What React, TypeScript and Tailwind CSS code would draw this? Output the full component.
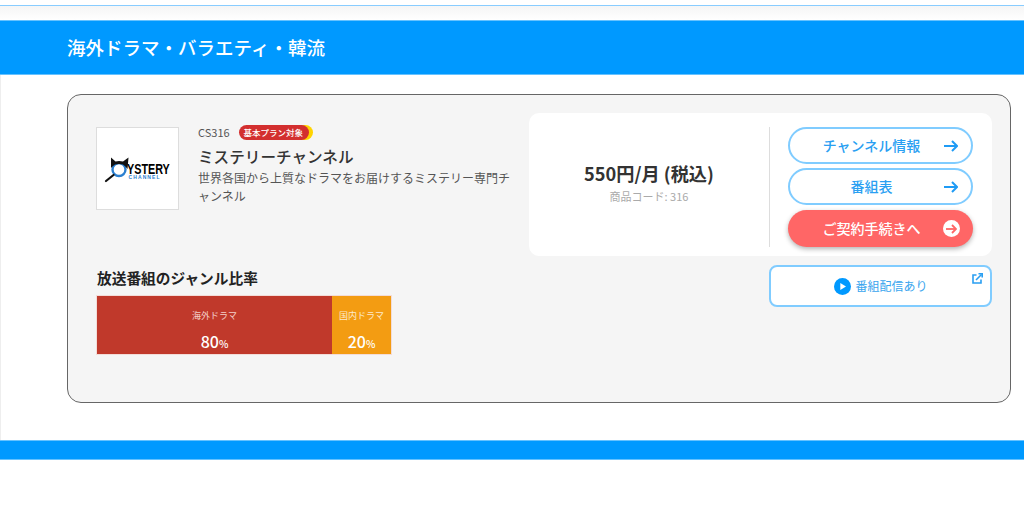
const Arrow = ({ color }: { color: string }) => (
  <svg width="14" height="12" viewBox="0 0 14 12" fill="none" stroke={color} strokeWidth="2">
    <path d="M0 6 H13" />
    <path d="M8 1 L13 6 L8 11" />
  </svg>
);

const LinkButton = ({ label }: { label: string }) => (
  <a className="relative flex h-[37px] w-[185px] items-center justify-center rounded-full border-2 border-[#80ccff] bg-white text-[14px] font-medium text-[#2a9ff2]">
    <span className="pr-[18px]">{label}</span>
    <span className="absolute right-[13px] top-[11px] flex">
      <Arrow color="#1f9bf5" />
    </span>
  </a>
);

const Logo = () => (
  <div className="flex h-[83px] w-[83px] shrink-0 items-center justify-center border border-[#dddddd] bg-white">
    <div className="relative h-[30px] w-[68px]">
      <svg className="absolute left-0 top-0" width="30" height="30" viewBox="0 0 30 30">
        <circle cx="15" cy="15.5" r="6.5" fill="none" stroke="#2b7fd0" strokeWidth="2.4" />
        <path d="M7 3.5 L7 14 Q9 11.5 11 10.5 Q15 9.5 19 10.5 Q21 11.5 23.5 15 L24.5 3.5 L19 7.5 Q15 6.5 11.5 7.5 Z" fill="#111" />
        <path d="M9.5 21 L2 27" stroke="#111" strokeWidth="2.2" strokeLinecap="round" />
      </svg>
      <span className="absolute left-[23px] top-[9px] origin-left scale-x-[0.72] text-[15px] font-bold leading-[12px] text-black [font-family:'Liberation_Sans',sans-serif]">
        YSTERY
      </span>
      <span className="absolute left-[25px] top-[21px] text-[5px] font-bold leading-[5px] tracking-[1.1px] text-[#2b7fd0] [font-family:'Liberation_Sans',sans-serif]">
        CHANNEL
      </span>
    </div>
  </div>
);

export default function App() {
  return (
    <div className="h-[529px] w-[1024px] overflow-hidden bg-white [font-family:'Noto_Sans_CJK_JP','Noto_Sans',sans-serif]">
      <div className="pt-[5px]">
        <div className="h-[1px] bg-[#88ccff]" />
        <div className="h-[14px] bg-gradient-to-b from-[#f5f5f5] to-white" />
      </div>
      <h2 className="flex h-[55px] items-center border-y border-[#66c2ff] bg-[#0099ff] pl-[67px] text-[18.5px] font-medium text-white">
        海外ドラマ・バラエティ・韓流
      </h2>

      <div className="h-[365px] border-l border-[#eeeeee] pl-[66px] pt-[19px]">
        <div className="flex h-[309px] w-[944px] justify-between rounded-[14px] border border-[#666666] bg-[#f5f5f5] pl-[28px] pr-[18px] pt-[18px]">
          <div className="w-[420px] pt-[13px]">
            <div className="flex gap-[19px]">
              <div className="pt-[1px]">
                <Logo />
              </div>
              <div className="w-[316px]">
                <div className="flex h-[12px] items-center gap-[9px] text-[11px] text-[#555555]">
                  <span>CS316</span>
                  <span className="flex h-[15px] w-[70px] items-center rounded-full bg-[#d32f2f] pl-[5px] text-[8.5px] font-medium text-white shadow-[4px_0_0_#ffd400]">
                    基本プラン対象
                  </span>
                </div>
                <h3 className="mt-[7px] text-[15.6px] font-medium leading-[22px] text-[#333333]">
                  ミステリーチャンネル
                </h3>
                <p className="mt-[2px] w-[314px] text-[12px] leading-[18px] text-[#555555]">
                  世界各国から上質なドラマをお届けするミステリー専門チャンネル
                </p>
              </div>
            </div>

            <h4 className="ml-[1px] mt-[57px] text-[14.7px] font-bold leading-[22px] text-[#222222]">放送番組のジャンル比率</h4>
            <div className="mt-[6px] flex h-[60px] w-[296px] border border-[#f3dcd8] text-white">
              <div className="flex w-[235px] flex-col items-center bg-[#c0392b]">
                <span className="mt-[12px] text-[9px] leading-[16px] text-[#f3cfc9]">海外ドラマ</span>
                <span className="mt-[7px] text-[16px] font-medium leading-[20px]">
                  80<span className="text-[10px]">%</span>
                </span>
              </div>
              <div className="flex flex-1 flex-col items-center bg-[#f39c12]">
                <span className="mt-[12px] text-[9px] leading-[16px] text-[#fdeacb]">国内ドラマ</span>
                <span className="mt-[7px] text-[16px] font-medium leading-[20px]">
                  20<span className="text-[10px]">%</span>
                </span>
              </div>
            </div>
          </div>

          <div className="w-[463px]">
            <div className="flex h-[143px] items-start rounded-[10px] bg-white pt-[14px]">
              <div className="flex h-[120px] w-[240px] flex-col items-center justify-center pb-[11px]">
                <span className="text-[18.2px] font-bold leading-[26px] text-[#333333]">550円/月 (税込)</span>
                <span className="mt-[2px] text-[11px] leading-[16px] text-[#aaaaaa]">商品コード: 316</span>
              </div>
              <div className="h-[120px] w-[1px] bg-[#dddddd]" />
              <div className="ml-[18px] flex flex-col gap-[4px]">
                <LinkButton label="チャンネル情報" />
                <LinkButton label="番組表" />
                <a className="relative mt-[1px] flex h-[37px] w-[185px] items-center justify-center rounded-full bg-[#ff6666] text-[14px] font-medium text-white shadow-[0_2px_5px_rgba(0,0,0,0.3)]">
                  <span className="pr-[18px]">ご契約手続きへ</span>
                  <span className="absolute right-[13px] top-[10px] flex h-[17px] w-[17px] items-center justify-center rounded-full bg-white">
                    <svg width="11" height="10" viewBox="0 0 11 10" fill="none" stroke="#ff6666" strokeWidth="1.8">
                      <path d="M0 5 H10" />
                      <path d="M6 1 L10 5 L6 9" />
                    </svg>
                  </span>
                </a>
              </div>
            </div>

            <a className="relative ml-[240px] mt-[9px] flex h-[42px] w-[223px] items-center justify-center gap-[4px] rounded-[8px] border-2 border-[#80ccff] bg-white pl-[1px] text-[12px] text-[#3aa5ee]">
              <svg width="17" height="17" viewBox="0 0 17 17">
                <circle cx="8.5" cy="8.5" r="8.5" fill="#0099ff" />
                <path d="M6.3 5 L12 8.5 L6.3 12 Z" fill="white" />
              </svg>
              <span>番組配信あり</span>
              <svg className="absolute right-[7px] top-[6px]" width="11" height="11" viewBox="0 0 11 11" fill="none" stroke="#2a9ff2" strokeWidth="1.6">
                <path d="M4.5 2 H1 V10 H9 V6.5" />
                <path d="M4 7 L9.5 1.5" />
                <path d="M6.5 0.8 H10.2 V4.5" />
              </svg>
            </a>
          </div>
        </div>
      </div>

      <div className="h-[20px] border-y border-[#66c2ff] bg-[#0099ff]" />
    </div>
  );
}
